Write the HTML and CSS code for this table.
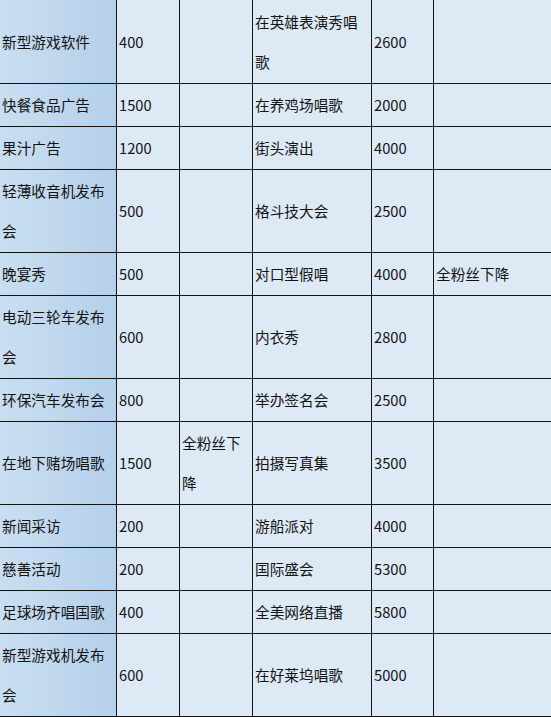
FILE: index.html
```html
<!DOCTYPE html>
<html lang="zh">
<head>
<meta charset="utf-8">
<link rel="stylesheet" href="styles.css">
</head>
<body>
<table class="sheet">
  <colgroup>
    <col class="c1"><col class="c2"><col class="c3"><col class="c4"><col class="c5"><col class="c6">
  </colgroup>
  <tbody>
    <tr class="first"><td class="name">新型游戏软件</td><td>400</td><td></td><td>在英雄表演秀唱<br>歌</td><td>2600</td><td></td></tr>
    <tr><td class="name">快餐食品广告</td><td>1500</td><td></td><td>在养鸡场唱歌</td><td>2000</td><td></td></tr>
    <tr><td class="name">果汁广告</td><td>1200</td><td></td><td>街头演出</td><td>4000</td><td></td></tr>
    <tr><td class="name">轻薄收音机发布<br>会</td><td>500</td><td></td><td>格斗技大会</td><td>2500</td><td></td></tr>
    <tr><td class="name">晚宴秀</td><td>500</td><td></td><td>对口型假唱</td><td>4000</td><td>全粉丝下降</td></tr>
    <tr><td class="name">电动三轮车发布<br>会</td><td>600</td><td></td><td>内衣秀</td><td>2800</td><td></td></tr>
    <tr><td class="name">环保汽车发布会</td><td>800</td><td></td><td>举办签名会</td><td>2500</td><td></td></tr>
    <tr><td class="name">在地下赌场唱歌</td><td>1500</td><td>全粉丝下<br>降</td><td>拍摄写真集</td><td>3500</td><td></td></tr>
    <tr><td class="name">新闻采访</td><td>200</td><td></td><td>游船派对</td><td>4000</td><td></td></tr>
    <tr><td class="name">慈善活动</td><td>200</td><td></td><td>国际盛会</td><td>5300</td><td></td></tr>
    <tr><td class="name">足球场齐唱国歌</td><td>400</td><td></td><td>全美网络直播</td><td>5800</td><td></td></tr>
    <tr><td class="name">新型游戏机发布<br>会</td><td>600</td><td></td><td>在好莱坞唱歌</td><td>5000</td><td></td></tr>
  </tbody>
</table>
</body>
</html>
```
FILE: styles.css
```css
html, body {
  margin: 0;
  padding: 0;
  background: #dde9f5;
}

.sheet {
  width: 551px;
  table-layout: fixed;
  border-collapse: separate;
  border-spacing: 0;
  font-family: "Noto Sans CJK SC", "Noto Sans", sans-serif;
  font-size: 14.67px;
  color: #141414;
}

.c1 { width: 117px; }
.c2 { width: 63px; }
.c3 { width: 73px; }
.c4 { width: 119px; }
.c5 { width: 62px; }
.c6 { width: 117px; }

.sheet td {
  box-sizing: border-box;
  background: #dde9f5;
  border-right: 1px solid #141414;
  border-bottom: 1px solid #141414;
  padding: 1px 0 1px 2px;
  line-height: 40px;
  vertical-align: middle;
  white-space: nowrap;
  overflow: hidden;
}

.sheet td:last-child {
  border-right: none;
}

.sheet tr.first td {
  padding-top: 2px;
}

.sheet td.name {
  background: linear-gradient(to right, #cadef1, #b5d0ea);
}
```
